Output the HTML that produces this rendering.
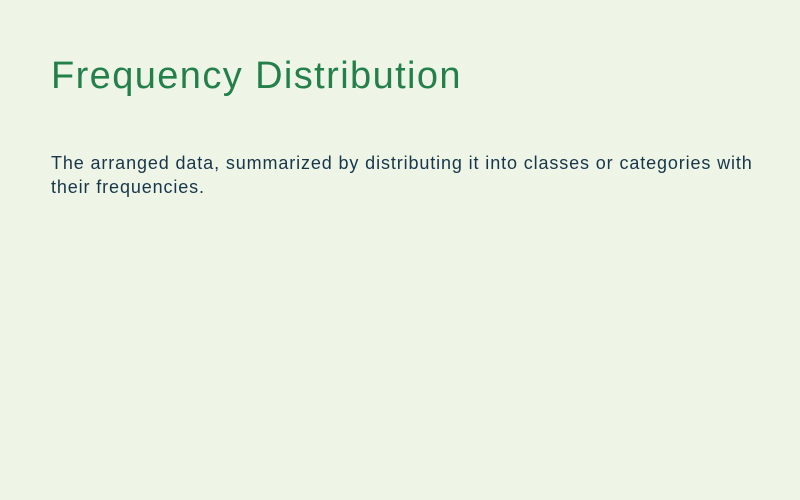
<!DOCTYPE html>
<html><head><meta charset="utf-8"><style>
html,body{margin:0;padding:0;width:800px;height:500px;background:#eef5e6;overflow:hidden}
h1{position:absolute;left:51px;top:52px;margin:0;font:400 38px/48px "Liberation Sans",sans-serif;color:#24804a;letter-spacing:1.4px}
p{position:absolute;left:51px;top:151px;margin:0;width:712px;font:400 18px/24px "Liberation Sans",sans-serif;color:#17364a;letter-spacing:0.88px}
</style></head><body>
<h1>Frequency Distribution</h1>
<p>The arranged data, summarized by distributing it into classes or categories with their frequencies.</p>
</body></html>
